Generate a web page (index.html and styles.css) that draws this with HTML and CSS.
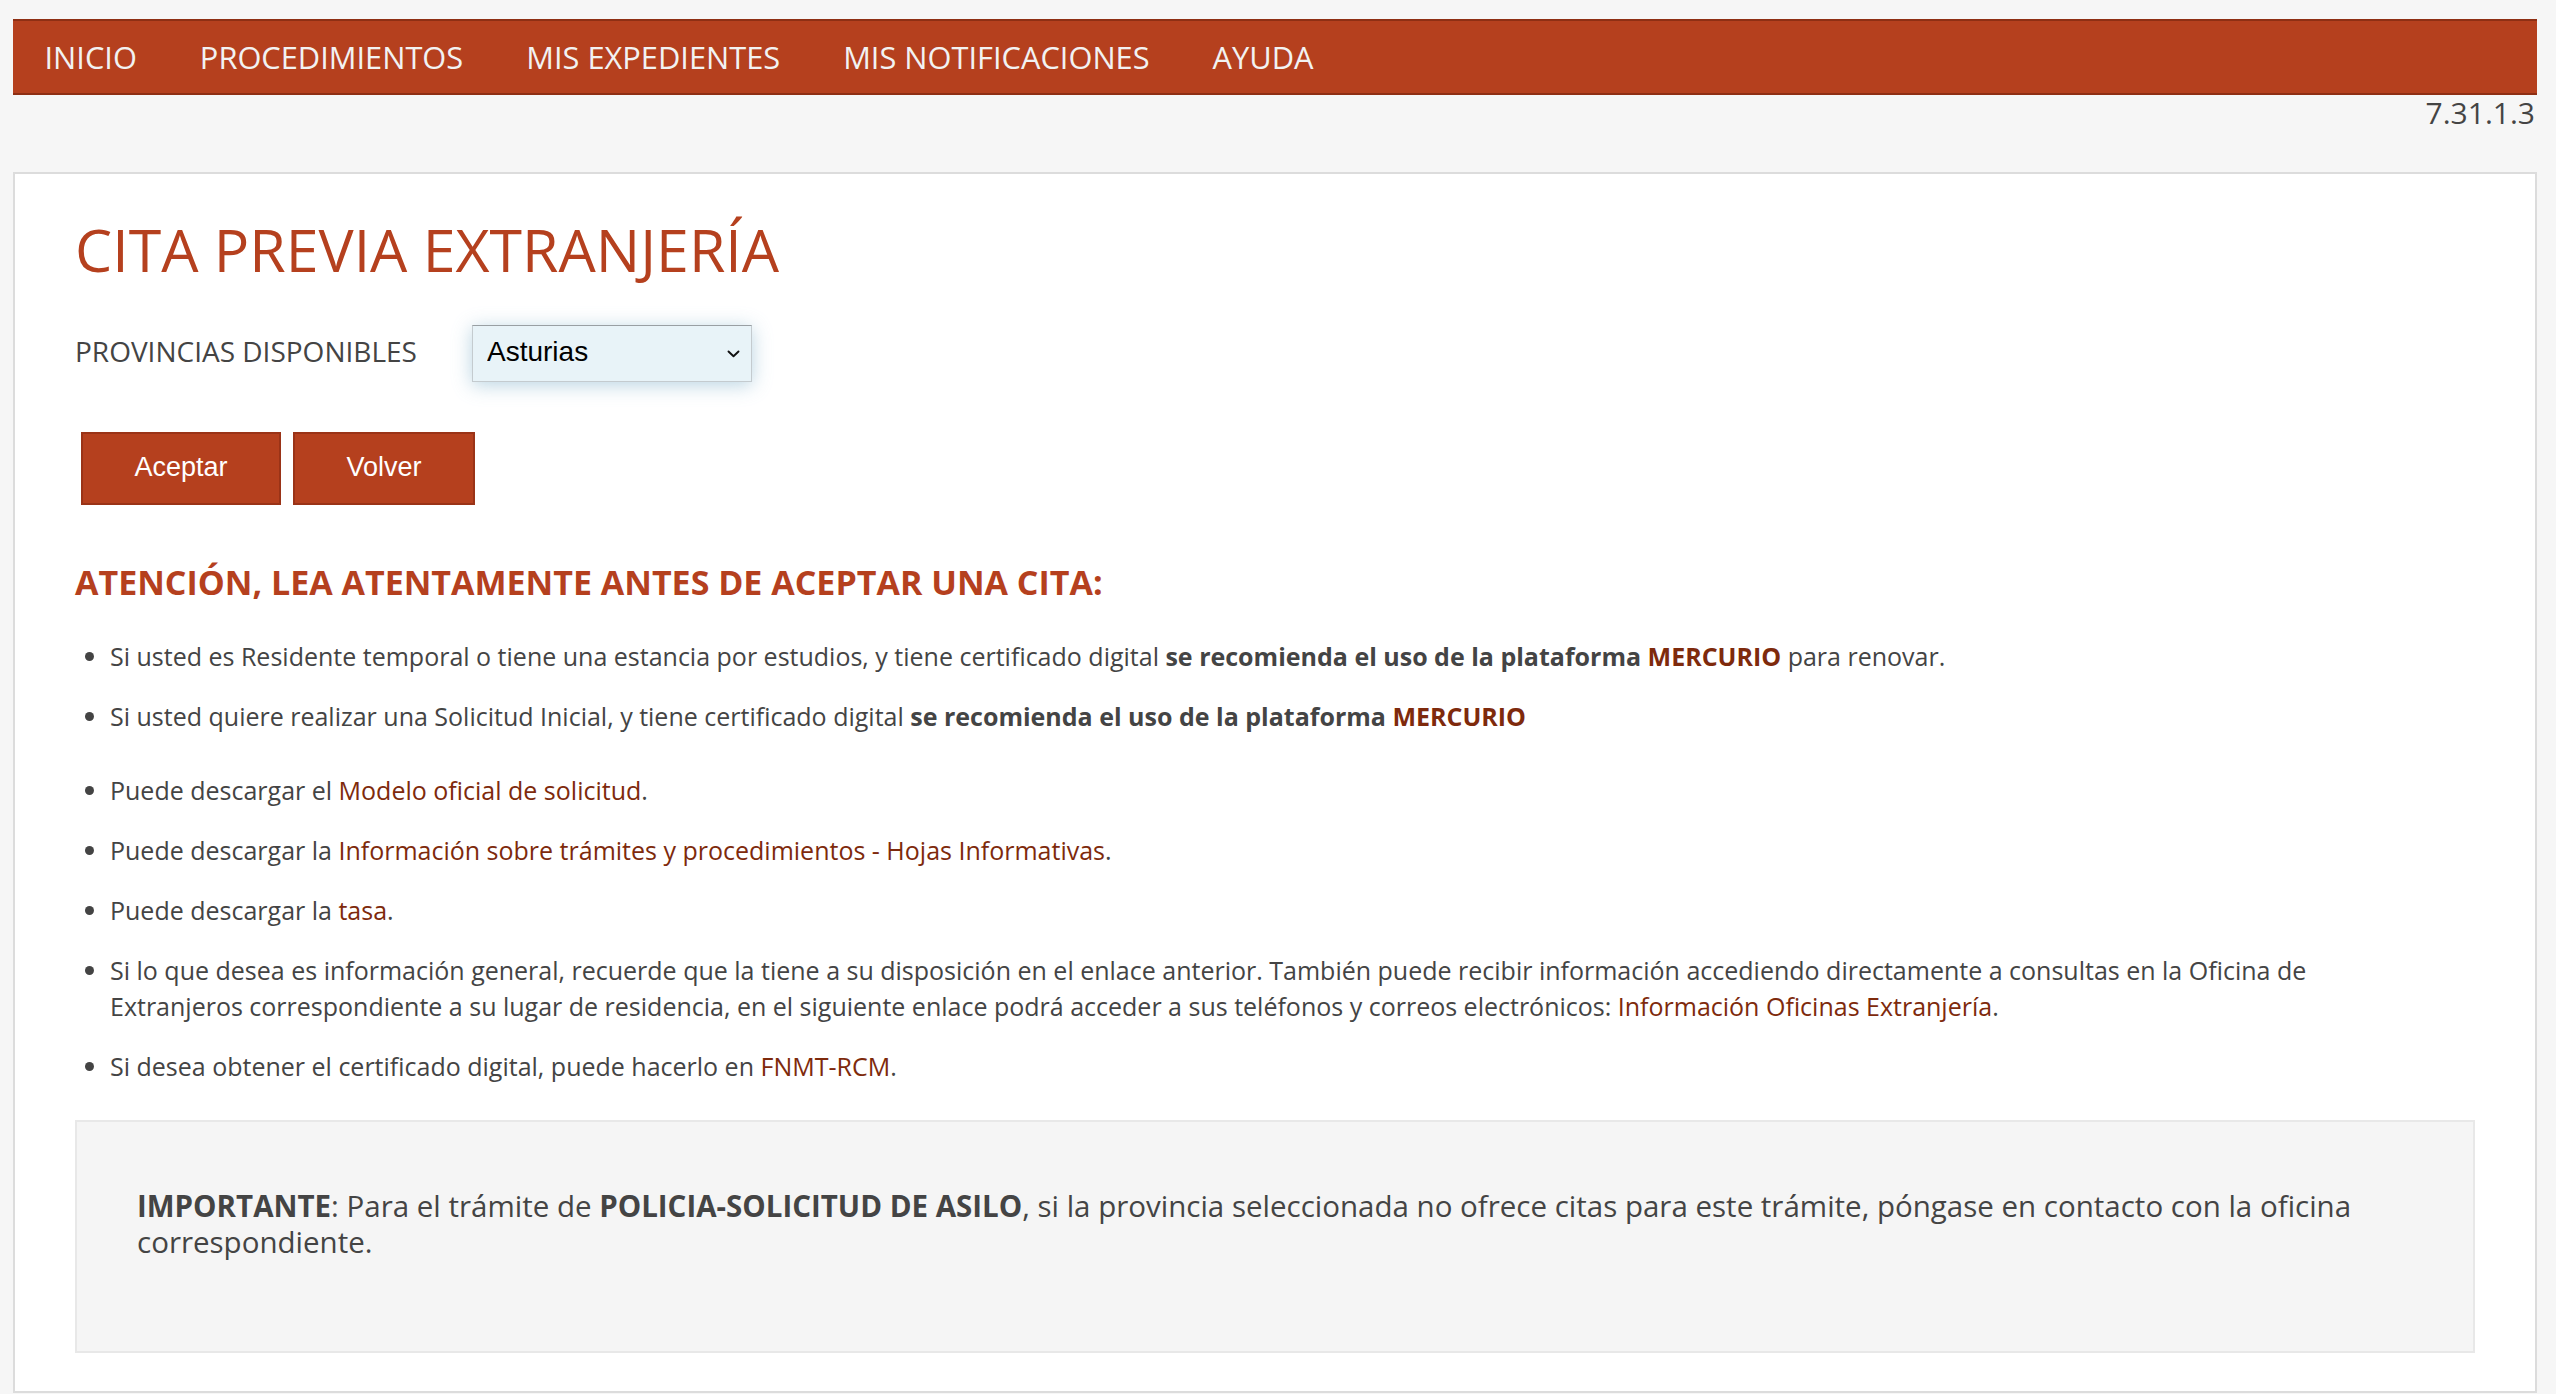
FILE: index.html
```html
<!DOCTYPE html>
<html lang="es">
<head>
<meta charset="utf-8">
<title>Cita Previa Extranjería</title>
<link rel="stylesheet" href="styles.css">
</head>
<body>
<nav class="topnav">
  <a href="#" class="nav-link">INICIO</a>
  <a href="#" class="nav-link">PROCEDIMIENTOS</a>
  <a href="#" class="nav-link">MIS EXPEDIENTES</a>
  <a href="#" class="nav-link">MIS NOTIFICACIONES</a>
  <a href="#" class="nav-link">AYUDA</a>
</nav>
<div class="version">7.31.1.3</div>
<main class="card">
  <h1 class="title">CITA PREVIA EXTRANJERÍA</h1>
  <div class="form-row">
    <label class="form-label" for="prov">PROVINCIAS DISPONIBLES</label>
    <div class="select-wrap">
      <select id="prov" class="select">
        <option>Asturias</option>
      </select>
      <svg class="select-arrow" width="13" height="8" viewBox="0 0 13 8"><path d="M1.5 1.5 L6.5 6.3 L11.5 1.5" fill="none" stroke="#111" stroke-width="1.9" stroke-linecap="round" stroke-linejoin="round"/></svg>
    </div>
  </div>
  <div class="buttons">
    <button class="btn btn-accept">Aceptar</button>
    <button class="btn btn-back">Volver</button>
  </div>
  <h2 class="notice-title">ATENCIÓN, LEA ATENTAMENTE ANTES DE ACEPTAR UNA CITA:</h2>
  <ul class="notice-list">
    <li>Si usted es Residente temporal o tiene una estancia por estudios, y tiene certificado digital <b>se recomienda el uso de la plataforma <a href="#" class="link">MERCURIO</a></b> para renovar.</li>
    <li class="gap-after">Si usted quiere realizar una Solicitud Inicial, y tiene certificado digital <b>se recomienda el uso de la plataforma <a href="#" class="link">MERCURIO</a></b></li>
    <li>Puede descargar el <a href="#" class="link">Modelo oficial de solicitud</a>.</li>
    <li>Puede descargar la <a href="#" class="link">Información sobre trámites y procedimientos - Hojas Informativas</a>.</li>
    <li>Puede descargar la <a href="#" class="link">tasa</a>.</li>
    <li>Si lo que desea es información general, recuerde que la tiene a su disposición en el enlace anterior. También puede recibir información accediendo directamente a consultas en la Oficina de Extranjeros correspondiente a su lugar de residencia, en el siguiente enlace podrá acceder a sus teléfonos y correos electrónicos: <a href="#" class="link">Información Oficinas Extranjería</a>.</li>
    <li>Si desea obtener el certificado digital, puede hacerlo en <a href="#" class="link">FNMT-RCM</a>.</li>
  </ul>
  <div class="important">
    <p><b>IMPORTANTE</b>: Para el trámite de <b>POLICIA-SOLICITUD DE ASILO</b>, si la provincia seleccionada no ofrece citas para este trámite, póngase en contacto con la oficina correspondiente.</p>
  </div>
</main>
</body>
</html>
```

FILE: styles.css
```css
html, body {
  margin: 0;
  padding: 0;
}
body {
  background: #f6f6f6;
  font-family: "Open Sans", "Noto Sans", sans-serif;
  color: #444;
  padding: 19px 19px 0 13px;
}
.topnav {
  display: flex;
  background: #b5401e;
  border-top: 2px solid #8e2f14;
  border-bottom: 2px solid #8e2f14;
  height: 72px;
  align-items: center;
}
.nav-link {
  color: #f2f2f2;
  text-decoration: none;
  font-size: 30.8px;
  line-height: 72px;
  padding: 0 31.5px;
}
.version {
  text-align: right;
  font-size: 30px;
  line-height: 36px;
  color: #444;
  padding-right: 2px;
}
.card {
  margin-top: 41px;
  background: #fff;
  border: 2px solid #dcdcdc;
  padding: 0 60px 38px 60px;
}
.title {
  margin: 41px 0 0 0;
  font-size: 59px;
  line-height: 68px;
  font-weight: 400;
  color: #b5401e;
}
.form-row {
  display: flex;
  align-items: center;
  margin-top: 42px;
}
.form-label {
  font-size: 28px;
  line-height: 36px;
  color: #444;
  width: 397px;
  padding-bottom: 6px;
}
.select-wrap {
  position: relative;
  width: 280px;
  height: 57px;
}
.select {
  appearance: none;
  -webkit-appearance: none;
  width: 280px;
  height: 57px;
  margin: 0;
  border: 1px solid #c4cbcf;
  border-top-color: #999fa3;
  background: #e8f3f8;
  box-shadow: 0 3px 18px rgba(100, 160, 190, 0.45);
  font-family: "Liberation Sans", Arial, sans-serif;
  font-size: 28px;
  color: #000;
  padding: 0 0 4px 14px;
  border-radius: 0;
}
.select-arrow {
  position: absolute;
  right: 12px;
  top: 25px;
  pointer-events: none;
}
.buttons {
  display: flex;
  gap: 12px;
  margin-top: 50px;
  padding-left: 6px;
}
.btn {
  height: 73px;
  background: #b5401e;
  border: 2px solid #9a3317;
  color: #fff;
  font-family: "Liberation Sans", Arial, sans-serif;
  font-size: 27px;
  padding: 0 0 2px 0;
  cursor: pointer;
}
.btn-accept { width: 200px; }
.btn-back { width: 182px; }
.notice-title {
  margin: 57px 0 0 0;
  font-size: 34px;
  line-height: 40px;
  font-weight: 700;
  color: #b5401e;
}
.notice-list {
  margin: 36px 0 0 0;
  padding: 0 40px 0 35px;
  font-size: 25px;
  line-height: 36px;
  color: #444;
}
.notice-list li {
  margin-bottom: 24px;
}
.notice-list li:last-child {
  margin-bottom: 0;
}
.notice-list li.gap-after {
  margin-bottom: 38px;
}
.notice-list b {
  font-weight: 700;
}
.link {
  color: #7e2a0c;
  text-decoration: none;
}
.important {
  margin-top: 36px;
  background: #f5f5f5;
  border: 2px solid #e8e8e8;
  padding: 66px 60px 91px 60px;
  font-size: 29.5px;
  line-height: 36px;
  color: #444;
}
.important p {
  margin: 0;
}
```
